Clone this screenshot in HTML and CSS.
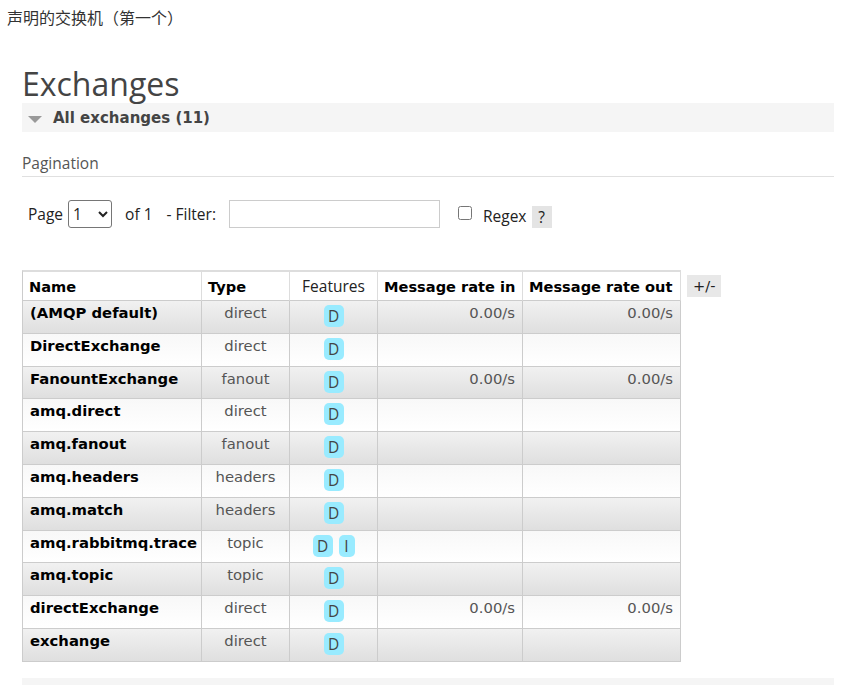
FILE: index.html
```html
<html>

<head>
  <meta charset="utf-8" />
  <title>Exchanges</title>
  <link rel="stylesheet" href="styles.css">
</head>

<body>
  <div class="note">声明的交换机（第一个）</div>

  <div class="main">
    <h1>Exchanges</h1>

    <div class="section">
      <div class="section-head"><span class="arrow"></span>All exchanges (11)</div>

      <h3 class="pag-title">Pagination</h3>
      <div class="pag-row">
        <span>Page</span>
        <select class="page-select">
          <option>1</option>
        </select>
        <span class="of">of 1</span>
        <span class="filter-label">- Filter:</span>
        <input class="filter" type="text" />
        <input class="regex-box" type="checkbox" />
        <span class="regex">Regex</span>
        <span class="help">?</span>
      </div>

      <div class="table-wrap">
        <table class="list">
          <colgroup>
            <col class="c-name">
            <col class="c-type">
            <col class="c-feat">
            <col class="c-in">
            <col class="c-out">
          </colgroup>
          <thead>
            <tr>
              <th>Name</th>
              <th>Type</th>
              <th class="h-feat">Features</th>
              <th>Message rate in</th>
              <th>Message rate out</th>
            </tr>
          </thead>
          <tbody>
            <tr class="alt1">
              <td class="name">(AMQP default)</td>
              <td class="type">direct</td>
              <td class="feat"><span class="badge">D</span></td>
              <td class="rate">0.00/s</td>
              <td class="rate">0.00/s</td>
            </tr>
            <tr class="alt2">
              <td class="name">DirectExchange</td>
              <td class="type">direct</td>
              <td class="feat"><span class="badge">D</span></td>
              <td class="rate"></td>
              <td class="rate"></td>
            </tr>
            <tr class="alt1">
              <td class="name">FanountExchange</td>
              <td class="type">fanout</td>
              <td class="feat"><span class="badge">D</span></td>
              <td class="rate">0.00/s</td>
              <td class="rate">0.00/s</td>
            </tr>
            <tr class="alt2">
              <td class="name">amq.direct</td>
              <td class="type">direct</td>
              <td class="feat"><span class="badge">D</span></td>
              <td class="rate"></td>
              <td class="rate"></td>
            </tr>
            <tr class="alt1">
              <td class="name">amq.fanout</td>
              <td class="type">fanout</td>
              <td class="feat"><span class="badge">D</span></td>
              <td class="rate"></td>
              <td class="rate"></td>
            </tr>
            <tr class="alt2">
              <td class="name">amq.headers</td>
              <td class="type">headers</td>
              <td class="feat"><span class="badge">D</span></td>
              <td class="rate"></td>
              <td class="rate"></td>
            </tr>
            <tr class="alt1">
              <td class="name">amq.match</td>
              <td class="type">headers</td>
              <td class="feat"><span class="badge">D</span></td>
              <td class="rate"></td>
              <td class="rate"></td>
            </tr>
            <tr class="alt2">
              <td class="name">amq.rabbitmq.trace</td>
              <td class="type">topic</td>
              <td class="feat"><span class="badge">D</span><span class="badge badge-i">I</span></td>
              <td class="rate"></td>
              <td class="rate"></td>
            </tr>
            <tr class="alt1">
              <td class="name">amq.topic</td>
              <td class="type">topic</td>
              <td class="feat"><span class="badge">D</span></td>
              <td class="rate"></td>
              <td class="rate"></td>
            </tr>
            <tr class="alt2">
              <td class="name">directExchange</td>
              <td class="type">direct</td>
              <td class="feat"><span class="badge">D</span></td>
              <td class="rate">0.00/s</td>
              <td class="rate">0.00/s</td>
            </tr>
            <tr class="alt1">
              <td class="name">exchange</td>
              <td class="type">direct</td>
              <td class="feat"><span class="badge">D</span></td>
              <td class="rate"></td>
              <td class="rate"></td>
            </tr>
          </tbody>
        </table>
        <span class="toggle">+/-</span>
      </div>
    </div>

    <div class="section-next"></div>
  </div>
</body>

</html>
```

FILE: styles.css
```css
body {
  margin: 0;
  font-family: "DejaVu Sans", Verdana, sans-serif;
  color: #444;
}

.note {
  font-family: "Noto Sans CJK SC", sans-serif;
  font-size: 16px;
  color: #333;
  padding: 5px 0 0 7px;
  line-height: 24px;
}

.main {
  width: 812px;
  padding-left: 22px;
}

h1 {
  font-family: "Open Sans", sans-serif;
  font-weight: 400;
  font-size: 32px;
  color: #444;
  margin: 36px 0 0 0;
  line-height: 38px;
}

.section-head {
  background-color: #f5f5f5;
  height: 29px;
  font-weight: bold;
  font-size: 15px;
  color: #444;
  display: flex;
  align-items: center;
}

.arrow {
  width: 0;
  height: 0;
  border-left: 7px solid transparent;
  border-right: 7px solid transparent;
  border-top: 7px solid #999;
  margin: 3px 11px 0 6px;
}

.pag-title {
  font-family: "Open Sans", sans-serif;
  font-weight: 400;
  font-size: 15.5px;
  color: #555;
  margin: 21px 0 0 0;
  padding-bottom: 3px;
  line-height: 20px;
  border-bottom: 1px solid #e0e0e0;
}

.pag-row {
  display: flex;
  align-items: center;
  font-family: "Open Sans", sans-serif;
  font-size: 15.5px;
  color: #222;
  margin-top: 23px;
  padding-left: 6px;
  height: 28px;
}

.page-select {
  width: 44px;
  height: 28px;
  margin-left: 5px;
  font-family: "Open Sans", sans-serif;
  font-size: 15.5px;
  border: 1px solid #767676;
  border-radius: 3px;
  background: white;
  color: #222;
}

.of {
  margin-left: 13px;
}

.filter-label {
  margin-left: 14px;
}

.filter {
  width: 211px;
  height: 28px;
  margin-left: 13px;
  border: 1px solid #ccc;
  box-sizing: border-box;
}

.regex-box {
  width: 14px;
  height: 14px;
  margin: 0 0 3px 18px;
}

.regex {
  margin-left: 11px;
  margin-top: 4px;
}

.help {
  background-color: #e4e4e4;
  margin-left: 5px;
  margin-top: 5px;
  width: 20px;
  height: 22px;
  line-height: 22px;
  text-align: center;
}

.table-wrap {
  display: flex;
  align-items: flex-start;
  margin-top: 42px;
}

table.list {
  border-collapse: separate;
  border-spacing: 0;
  table-layout: fixed;
  width: 658px;
  border-top: 2px solid #ddd;
  border-left: 1px solid #ccc;
  font-size: 14.8px;
}

.c-name {
  width: 179px;
}

.c-type {
  width: 88px;
}

.c-feat {
  width: 88px;
}

.c-in {
  width: 145px;
}

.c-out {
  width: 158px;
}

table.list th {
  background: white;
  border-right: 1px solid #ddd;
  border-bottom: 1px solid #ccc;
  color: #000;
  font-size: 14.6px;
  height: 29px;
  padding: 0 6px;
  text-align: left;
  box-sizing: border-box;
  white-space: nowrap;
}

table.list th.h-feat {
  font-family: "Open Sans", sans-serif;
  font-weight: 400;
  font-size: 15.5px;
  color: #222;
  text-align: center;
}

table.list td {
  border-right: 1px solid #ccc;
  border-bottom: 1px solid #ccc;
  height: 32.8px;
  line-height: 18px;
  padding: 3px 7px 0 7px;
  box-sizing: border-box;
  vertical-align: top;
  white-space: nowrap;
}

tr.alt1 td {
  background: linear-gradient(#f1f1f1, #dfdfdf);
}

tr.alt2 td {
  background: linear-gradient(#f8f8f8, #ffffff);
}

td.name {
  font-weight: bold;
  color: #000;
}

td.type {
  text-align: center;
  color: #555;
}

td.feat {
  text-align: center;
}

td.rate {
  text-align: right;
  color: #555;
}

.badge {
  display: inline-block;
  background-color: #99ebff;
  border-radius: 5px;
  font-family: "Open Sans", sans-serif;
  font-size: 15.5px;
  color: #444;
  width: 20px;
  height: 22px;
  line-height: 22px;
  text-align: center;
  margin-top: 1px;
}

.badge-i {
  width: 16px;
  margin-left: 6px;
}

.toggle {
  background-color: #e8e8e8;
  margin: 5px 0 0 6px;
  padding: 0 6px;
  height: 22px;
  line-height: 22px;
  font-size: 14.6px;
  color: #222;
}

.section-next {
  background-color: #f5f5f5;
  height: 10px;
  margin-top: 16px;
}
```
